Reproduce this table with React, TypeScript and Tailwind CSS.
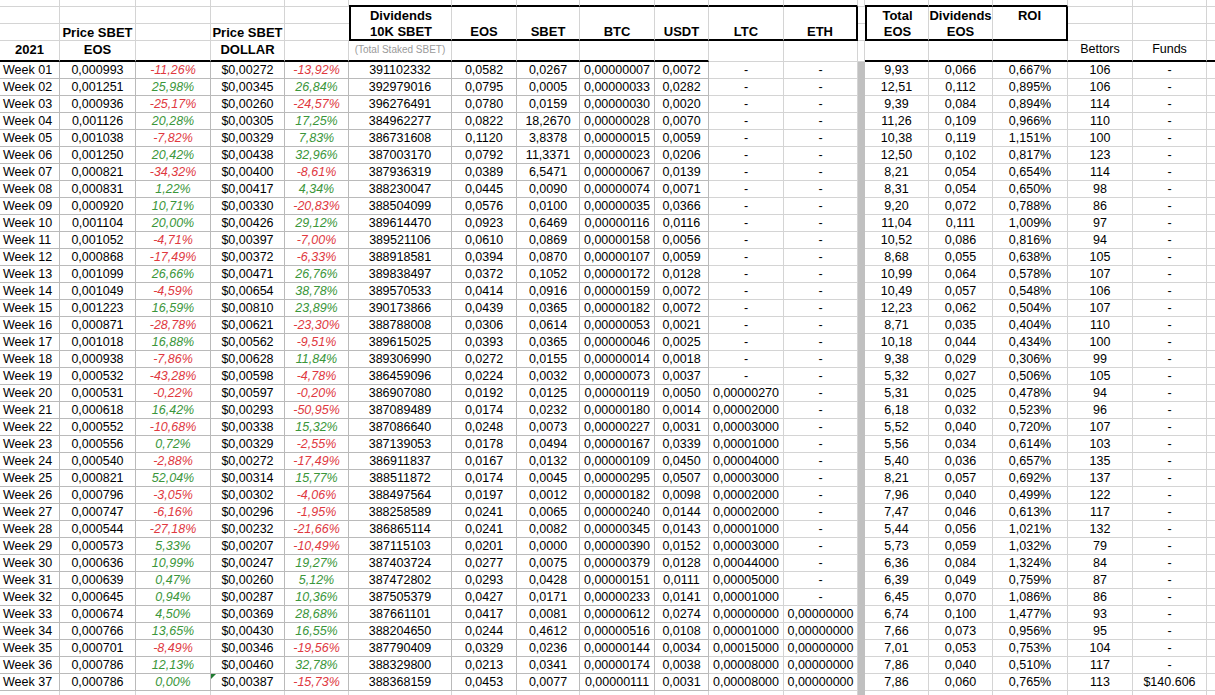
import React from "react";

// column widths, index 12 is the narrow grey separator column
const W = [
  "w-[60px]",
  "w-[76px]",
  "w-[75px]",
  "w-[74px]",
  "w-[64px]",
  "w-[103px]",
  "w-[65px]",
  "w-[63px]",
  "w-[75px]",
  "w-[54px]",
  "w-[75px]",
  "w-[74px]",
  "w-[7px]",
  "w-[64px]",
  "w-[64px]",
  "w-[75px]",
  "w-[65px]",
  "w-[74px]",
];

type Row = string[];

const rows: Row[] = [
  ["Week 01", "0,000993", "-11,26%", "$0,00272", "-13,92%", "391102332", "0,0582", "0,0267", "0,00000007", "0,0072", "-", "-", "9,93", "0,066", "0,667%", "106", "-"],
  ["Week 02", "0,001251", "25,98%", "$0,00345", "26,84%", "392979016", "0,0795", "0,0005", "0,00000033", "0,0282", "-", "-", "12,51", "0,112", "0,895%", "106", "-"],
  ["Week 03", "0,000936", "-25,17%", "$0,00260", "-24,57%", "396276491", "0,0780", "0,0159", "0,00000030", "0,0020", "-", "-", "9,39", "0,084", "0,894%", "114", "-"],
  ["Week 04", "0,001126", "20,28%", "$0,00305", "17,25%", "384962277", "0,0822", "18,2670", "0,00000028", "0,0070", "-", "-", "11,26", "0,109", "0,966%", "110", "-"],
  ["Week 05", "0,001038", "-7,82%", "$0,00329", "7,83%", "386731608", "0,1120", "3,8378", "0,00000015", "0,0059", "-", "-", "10,38", "0,119", "1,151%", "100", "-"],
  ["Week 06", "0,001250", "20,42%", "$0,00438", "32,96%", "387003170", "0,0792", "11,3371", "0,00000023", "0,0206", "-", "-", "12,50", "0,102", "0,817%", "123", "-"],
  ["Week 07", "0,000821", "-34,32%", "$0,00400", "-8,61%", "387936319", "0,0389", "6,5471", "0,00000067", "0,0139", "-", "-", "8,21", "0,054", "0,654%", "114", "-"],
  ["Week 08", "0,000831", "1,22%", "$0,00417", "4,34%", "388230047", "0,0445", "0,0090", "0,00000074", "0,0071", "-", "-", "8,31", "0,054", "0,650%", "98", "-"],
  ["Week 09", "0,000920", "10,71%", "$0,00330", "-20,83%", "388504099", "0,0576", "0,0100", "0,00000035", "0,0366", "-", "-", "9,20", "0,072", "0,788%", "86", "-"],
  ["Week 10", "0,001104", "20,00%", "$0,00426", "29,12%", "389614470", "0,0923", "0,6469", "0,00000116", "0,0116", "-", "-", "11,04", "0,111", "1,009%", "97", "-"],
  ["Week 11", "0,001052", "-4,71%", "$0,00397", "-7,00%", "389521106", "0,0610", "0,0869", "0,00000158", "0,0056", "-", "-", "10,52", "0,086", "0,816%", "94", "-"],
  ["Week 12", "0,000868", "-17,49%", "$0,00372", "-6,33%", "388918581", "0,0394", "0,0870", "0,00000107", "0,0059", "-", "-", "8,68", "0,055", "0,638%", "105", "-"],
  ["Week 13", "0,001099", "26,66%", "$0,00471", "26,76%", "389838497", "0,0372", "0,1052", "0,00000172", "0,0128", "-", "-", "10,99", "0,064", "0,578%", "107", "-"],
  ["Week 14", "0,001049", "-4,59%", "$0,00654", "38,78%", "389570533", "0,0414", "0,0916", "0,00000159", "0,0072", "-", "-", "10,49", "0,057", "0,548%", "106", "-"],
  ["Week 15", "0,001223", "16,59%", "$0,00810", "23,89%", "390173866", "0,0439", "0,0365", "0,00000182", "0,0072", "-", "-", "12,23", "0,062", "0,504%", "107", "-"],
  ["Week 16", "0,000871", "-28,78%", "$0,00621", "-23,30%", "388788008", "0,0306", "0,0614", "0,00000053", "0,0021", "-", "-", "8,71", "0,035", "0,404%", "110", "-"],
  ["Week 17", "0,001018", "16,88%", "$0,00562", "-9,51%", "389615025", "0,0393", "0,0365", "0,00000046", "0,0025", "-", "-", "10,18", "0,044", "0,434%", "100", "-"],
  ["Week 18", "0,000938", "-7,86%", "$0,00628", "11,84%", "389306990", "0,0272", "0,0155", "0,00000014", "0,0018", "-", "-", "9,38", "0,029", "0,306%", "99", "-"],
  ["Week 19", "0,000532", "-43,28%", "$0,00598", "-4,78%", "386459096", "0,0224", "0,0032", "0,00000073", "0,0037", "-", "-", "5,32", "0,027", "0,506%", "105", "-"],
  ["Week 20", "0,000531", "-0,22%", "$0,00597", "-0,20%", "386907080", "0,0192", "0,0125", "0,00000119", "0,0050", "0,00000270", "-", "5,31", "0,025", "0,478%", "94", "-"],
  ["Week 21", "0,000618", "16,42%", "$0,00293", "-50,95%", "387089489", "0,0174", "0,0232", "0,00000180", "0,0014", "0,00002000", "-", "6,18", "0,032", "0,523%", "96", "-"],
  ["Week 22", "0,000552", "-10,68%", "$0,00338", "15,32%", "387086640", "0,0248", "0,0073", "0,00000227", "0,0031", "0,00003000", "-", "5,52", "0,040", "0,720%", "107", "-"],
  ["Week 23", "0,000556", "0,72%", "$0,00329", "-2,55%", "387139053", "0,0178", "0,0494", "0,00000167", "0,0339", "0,00001000", "-", "5,56", "0,034", "0,614%", "103", "-"],
  ["Week 24", "0,000540", "-2,88%", "$0,00272", "-17,49%", "386911837", "0,0167", "0,0132", "0,00000109", "0,0450", "0,00004000", "-", "5,40", "0,036", "0,657%", "135", "-"],
  ["Week 25", "0,000821", "52,04%", "$0,00314", "15,77%", "388511872", "0,0174", "0,0045", "0,00000295", "0,0507", "0,00003000", "-", "8,21", "0,057", "0,692%", "137", "-"],
  ["Week 26", "0,000796", "-3,05%", "$0,00302", "-4,06%", "388497564", "0,0197", "0,0012", "0,00000182", "0,0098", "0,00002000", "-", "7,96", "0,040", "0,499%", "122", "-"],
  ["Week 27", "0,000747", "-6,16%", "$0,00296", "-1,95%", "388258589", "0,0241", "0,0065", "0,00000240", "0,0144", "0,00002000", "-", "7,47", "0,046", "0,613%", "117", "-"],
  ["Week 28", "0,000544", "-27,18%", "$0,00232", "-21,66%", "386865114", "0,0241", "0,0082", "0,00000345", "0,0143", "0,00001000", "-", "5,44", "0,056", "1,021%", "132", "-"],
  ["Week 29", "0,000573", "5,33%", "$0,00207", "-10,49%", "387115103", "0,0201", "0,0000", "0,00000390", "0,0152", "0,00003000", "-", "5,73", "0,059", "1,032%", "79", "-"],
  ["Week 30", "0,000636", "10,99%", "$0,00247", "19,27%", "387403724", "0,0277", "0,0075", "0,00000379", "0,0128", "0,00044000", "-", "6,36", "0,084", "1,324%", "84", "-"],
  ["Week 31", "0,000639", "0,47%", "$0,00260", "5,12%", "387472802", "0,0293", "0,0428", "0,00000151", "0,0111", "0,00005000", "-", "6,39", "0,049", "0,759%", "87", "-"],
  ["Week 32", "0,000645", "0,94%", "$0,00287", "10,36%", "387505379", "0,0427", "0,0171", "0,00000233", "0,0141", "0,00001000", "-", "6,45", "0,070", "1,086%", "86", "-"],
  ["Week 33", "0,000674", "4,50%", "$0,00369", "28,68%", "387661101", "0,0417", "0,0081", "0,00000612", "0,0274", "0,00000000", "0,00000000", "6,74", "0,100", "1,477%", "93", "-"],
  ["Week 34", "0,000766", "13,65%", "$0,00430", "16,55%", "388204650", "0,0244", "0,4612", "0,00000516", "0,0108", "0,00001000", "0,00000000", "7,66", "0,073", "0,956%", "95", "-"],
  ["Week 35", "0,000701", "-8,49%", "$0,00346", "-19,56%", "387790409", "0,0329", "0,0236", "0,00000144", "0,0034", "0,00015000", "0,00000000", "7,01", "0,053", "0,753%", "104", "-"],
  ["Week 36", "0,000786", "12,13%", "$0,00460", "32,78%", "388329800", "0,0213", "0,0341", "0,00000174", "0,0038", "0,00008000", "0,00000000", "7,86", "0,040", "0,510%", "117", "-"],
  ["Week 37", "0,000786", "0,00%", "$0,00387", "-15,73%", "388368159", "0,0453", "0,0077", "0,00000111", "0,0031", "0,00008000", "0,00000000", "7,86", "0,060", "0,765%", "113", "$140.606"],
];

function Cell({ i, className = "", children }: { i: number; className?: string; children?: React.ReactNode }) {
  return (
    <div className={`${W[i]} shrink-0 h-full flex items-center justify-center whitespace-nowrap ${className}`}>
      {children}
    </div>
  );
}

const inBox = (i: number) => (i >= 5 && i <= 11) || (i >= 13 && i <= 15);

function headerBorders(i: number, bottom: "none" | "thick" | "grey") {
  const parts: string[] = [];
  // right edge
  if (i === 11 || i === 15) parts.push("border-r-2 border-r-black");
  else if (i === 4 || i === 12) parts.push("border-r-0");
  else parts.push("border-r border-r-[#d4d4d4]");
  // left edge of boxes
  if (i === 5 || i === 13) parts.push("border-l-2 border-l-black");
  // bottom edge
  if (!inBox(i)) parts.push("border-b border-b-[#d4d4d4]");
  else if (bottom === "thick") parts.push("border-b-2 border-b-black");
  else if (bottom === "grey") parts.push("border-b border-b-[#d4d4d4]");
  return parts.join(" ");
}

const bold = "font-bold text-[13px]";

export default function App() {
  const idx = W.map((_, i) => i);

  return (
    <div className="w-full h-[695px] overflow-hidden bg-white text-black font-['Liberation_Sans',Arial,sans-serif] text-[12.5px] leading-none">
      {/* row A: thin top strip, box tops */}
      <div className="flex h-[7px]">
        {idx.map((i) => (
          <Cell
            key={i}
            i={i}
            className={`border-r border-r-[#d4d4d4] ${inBox(i) ? "border-b-2 border-b-black" : "border-b border-b-[#d4d4d4]"}`}
          />
        ))}
        <div className="flex-1 border-b border-b-[#d4d4d4]" />
      </div>

      {/* row B */}
      <div className="flex h-[17px]">
        {idx.map((i) => (
          <Cell key={i} i={i} className={`${headerBorders(i, "none")} ${bold}`}>
            {i === 5 && "Dividends"}
            {i === 13 && "Total"}
            {i === 14 && "Dividends"}
            {i === 15 && "ROI"}
          </Cell>
        ))}
        <div className="flex-1 border-b border-b-[#d4d4d4]" />
      </div>

      {/* row C */}
      <div className="flex h-[17px]">
        {idx.map((i) => (
          <Cell key={i} i={i} className={`${headerBorders(i, "thick")} ${bold}`}>
            {(i === 1 || i === 3) && "Price SBET"}
            {i === 5 && "10K SBET"}
            {i === 6 && "EOS"}
            {i === 7 && "SBET"}
            {i === 8 && "BTC"}
            {i === 9 && "USDT"}
            {i === 10 && "LTC"}
            {i === 11 && "ETH"}
            {(i === 13 || i === 14) && "EOS"}
          </Cell>
        ))}
        <div className="flex-1 border-b border-b-[#d4d4d4]" />
      </div>

      {/* row D */}
      <div className="flex h-[21px]">
        {idx.map((i) => (
          <Cell
            key={i}
            i={i}
            className={`border-r border-r-[#d4d4d4] pb-[2px] ${
              i >= 10 && i <= 12 ? "border-b border-b-[#d4d4d4]" : "border-b-2 border-b-black"
            }`}
          >
            {i === 0 && <span className={bold}>2021</span>}
            {i === 1 && <span className={bold}>EOS</span>}
            {i === 3 && <span className={bold}>DOLLAR</span>}
            {i === 5 && <span className="text-[10px] text-[#9a9a9a]">(Total Staked SBET)</span>}
            {i === 16 && "Bettors"}
            {i === 17 && "Funds"}
          </Cell>
        ))}
        <div className="flex-1 border-b-2 border-b-black" />
      </div>

      {/* data rows */}
      {rows.map((r, ri) => (
        <div key={ri} className="flex h-[17px]">
          {idx.map((i) => {
            if (i === 12) return <Cell key={i} i={i} className="bg-[#c0c0c0]" />;
            const v = r[i < 12 ? i : i - 1];
            const grid = i <= 9 ? "border-r border-b border-[#bababa]" : "border-r border-b border-[#d4d4d4]";
            const isPct = i === 2 || i === 4;
            const tone = isPct ? (v.startsWith("-") ? "italic text-[#e0393f]" : "italic text-[#3a963a]") : "";
            return (
              <Cell
                key={i}
                i={i}
                className={`${grid} ${tone} ${i === 0 ? "justify-start pl-[3px]" : ""} ${i === 3 && ri === rows.length - 1 ? "relative" : ""}`}
              >
                {i === 3 && ri === rows.length - 1 && (
                  <span className="absolute top-0 left-0 w-0 h-0 border-t-[5px] border-r-[5px] border-t-[#1f7a30] border-r-transparent" />
                )}
                {v}
              </Cell>
            );
          })}
          <div className="flex-1 border-b border-b-[#d4d4d4]" />
        </div>
      ))}

      {/* partially visible empty row */}
      <div className="flex h-[17px]">
        {idx.map((i) =>
          i === 12 ? (
            <Cell key={i} i={i} className="bg-[#c0c0c0]" />
          ) : (
            <Cell key={i} i={i} className="border-r border-[#d4d4d4]" />
          )
        )}
        <div className="flex-1" />
      </div>
    </div>
  );
}
